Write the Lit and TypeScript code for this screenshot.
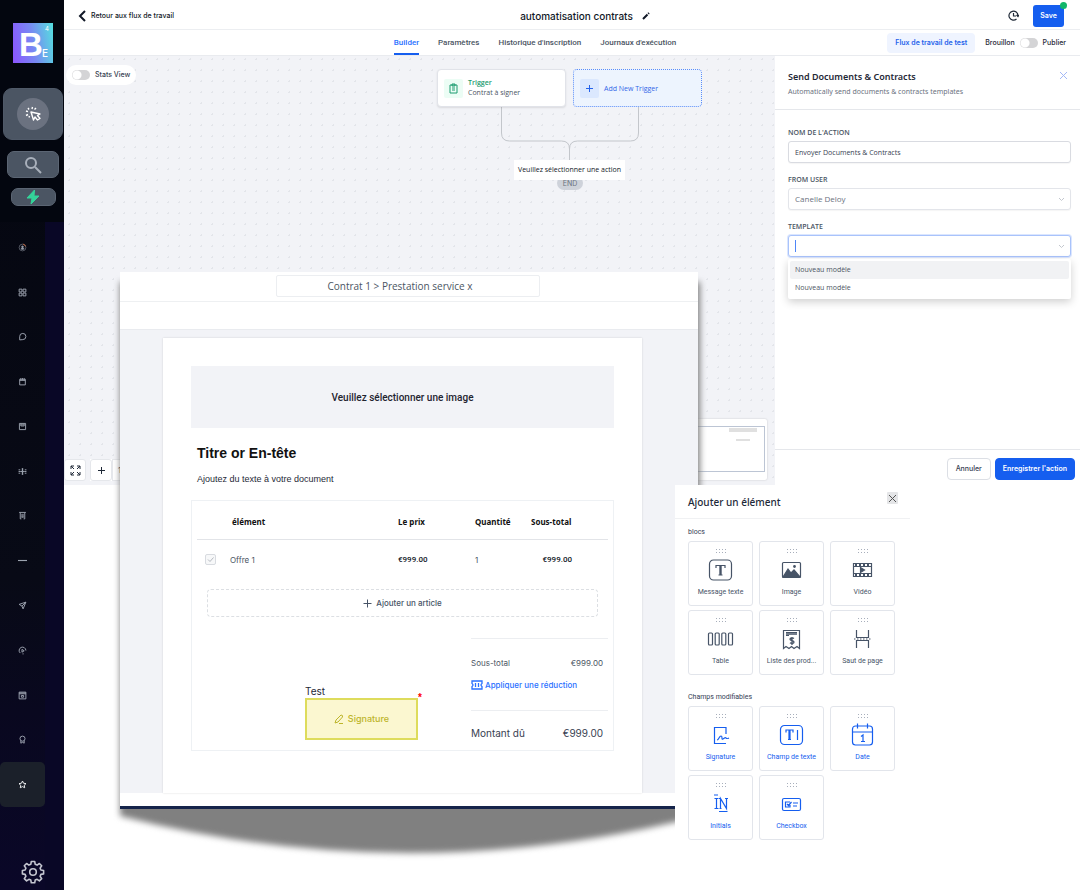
import { LitElement, html, css, svg, TemplateResult } from "lit";
import { customElement } from "lit/decorators.js";
import { classMap } from "lit/directives/class-map.js";

type Glyph = TemplateResult;

const navIcons: { label: string; art: Glyph }[] = [
  { label: "Lancement", art: svg`<circle cx="8" cy="8" r="6" opacity=".5"/><path d="M9 2a6 6 0 0 1 4.500 4" stroke="#c2643a"/><path d="M8 5v6M6 7l2-2 2 2M6 8v3h4V8"/>` },
  { label: "Tableau de bord", art: svg`<path d="M2 2h5v5H2zM9 2h5v5H9zM2 9h5v5H2zM9 9h5v5H9z"/>` },
  { label: "Conversations", art: svg`<path d="M3 14V8a5.500 5.500 0 1 1 5.500 5.500z"/>` },
  { label: "Calendriers", art: svg`<path d="M3 4h10v10H3zM3 6h10M5 2v3M8 2v3M11 2v3"/>` },
  { label: "Contacts", art: svg`<path d="M2.500 2.500h11v11h-11zM5 3v4h6V3M5 5h6"/>` },
  { label: "Opportunités", art: svg`<path d="M8 2v12" stroke-width="2.500"/><path d="M1 5h3M1 8h4M1 11h3M12 5h3M11 8h4M12 11h3"/><path d="M5 8h6"/>` },
  { label: "Paiements", art: svg`<path d="M2 2.500h12M4 3v11M12 3v11M4 14h2M10 14h2M7 5v6M9 5v6M6 11h4"/>` },
  { label: "Séparateur", art: svg`<path d="M0 8h16" stroke-width="2"/>` },
  { label: "Marketing", art: svg`<path d="M14 2L2 6l5 3 2 5zM14 2L7 9"/>` },
  { label: "Automatisation", art: svg`<path d="M4 12.500A6 6 0 1 1 14 8M7 6v5l4-2.500zM8 14h2"/>` },
  { label: "Sites", art: svg`<path d="M2 2h12v12H2zM2 5h12M6 8h4v3H6zM2 3.500h12"/>` },
  { label: "Réputation", art: svg`<circle cx="8" cy="6.500" r="4.500"/><path d="M5 10v4.500L8 13l3 1.500V10"/>` },
  { label: "Favoris", art: svg`<path d="M8 1.800l1.900 4 4.300.6-3.100 3 .8 4.400L8 11.700l-3.900 2.100.8-4.400-3.100-3 4.300-.6z"/>` },
];

interface Tile { label: string; art: Glyph }

const blocks: Tile[] = [
  { label: "Message texte", art: svg`<rect x="3.500" y="5" width="22" height="20" rx="4"/><path d="M10 13v-2.500h9V13M12.500 20h4"/><path d="M14.500 10v10" stroke-width="2.400"/>` },
  { label: "Image", art: svg`<rect x="5.500" y="7.500" width="18" height="15" rx="1"/><path d="M6 22l5-8 3 4 2-2 1-1 6 7z" fill="currentColor"/><circle cx="17.500" cy="11.500" r=".8" fill="currentColor"/>` },
  { label: "Vidéo", art: svg`<path d="M5.500 8.500h18v13h-18zM5.500 11.500h18M5.500 18.500h18"/><path d="M7 10h15M7 20h15" stroke-dasharray="2 2" stroke-width="2"/><path d="M12.500 12.500v5l4-2.500z" fill="currentColor"/>` },
  { label: "Table", art: svg`<rect x="2.500" y="9" width="4" height="12" rx="1"/><rect x="9.200" y="9" width="4" height="12" rx="1"/><rect x="15.800" y="9" width="4" height="12" rx="1"/><rect x="22.500" y="9" width="4" height="12" rx="1"/>` },
  { label: "Liste des prod...", art: svg`<path d="M6.500 24.500v-18h16v18l-2.500-2-3 2-2.500-2-2.500 2-3-2zM9 8.500h11M9 11.500h3"/><path d="M9 10h11" stroke-width="1.500"/><path d="M17 14.500c-1-.8-4-.8-4 .8s4 1 4 2.700-3 1.700-4 .8M15 13v8" stroke-width="1.300"/>` },
  { label: "Saut de page", art: svg`<path d="M8.500 6v7.500h12V6M8.500 24v-7.500h12V24"/><path d="M6 15h18" stroke-dasharray="1.500 1.500"/>` },
];

const fields: Tile[] = [
  { label: "Signature", art: svg`<path d="M20 14V7.500H8.500v16H14M11 20c2 0 2-4 4-4s0 4 2 3 2-2 3-1 1 1 3 0M13 23.500h7"/>` },
  { label: "Champ de texte", art: svg`<rect x="3.500" y="5.500" width="22" height="19" rx="4"/><path d="M9 12.500v-2.500h7v2.500M11 19.500h3"/><path d="M12.500 10v9.500" stroke-width="2.200"/><path d="M20.500 10v10"/>` },
  { label: "Date", art: svg`<rect x="4.500" y="6" width="20" height="19" rx="3"/><path d="M4.500 12h20M9.500 3.500v5M19.500 3.500v5M13 16.500l2-1.500v6.500M13 21.500h4"/>` },
  { label: "Initials", art: svg`<path d="M8 6h4M8.500 9.500h4M10.500 9.500v10M8.500 19.500h4M14.500 19.500v-10l6 10v-10M13 22.500h8.500M13 9.500h2M19 9.500h3M13.500 19.500h2"/>` },
  { label: "Checkbox", art: svg`<rect x="5.500" y="9.500" width="18" height="12" rx="1.500"/><path d="M13 13h-4.500v5H13v-2M10 15l1.500 1.500L14.500 13M16 14h5M16 17h4"/>` },
];

const base = css`
  *, *::before, *::after { box-sizing: border-box; }
  :host { font-family: Inter, "Liberation Sans", sans-serif; color: #1f2937; }
  button, input, select { font: inherit; color: inherit; margin: 0; }
  button { cursor: pointer; padding: 0; border: 0; background: none; }
  a { color: inherit; text-decoration: none; }
  svg { display: block; fill: none; stroke: currentColor; flex: none; }
  h1, h2, p, ul { margin: 0; padding: 0; font-weight: inherit; font-size: inherit; }
  ul { list-style: none; }
`;

@customElement("side-bar")
export class SideBar extends LitElement {
  static styles = [base, css`
    :host { display: flex; flex-direction: column; flex: none; width: 64px; color: #9ca3af;
      background: linear-gradient(180deg, #04060f, #080a16 65%, #09081f 80%, #0a0728) 0 0 / 45px 100% no-repeat, #090726; }
    .top { display: flex; flex-direction: column; align-items: center; height: 222px; padding: 23px 1px 0 3px; background: #03060f; }
    .logo { display: grid; grid-template-columns: 29px 11px; grid-template-rows: 12px 1fr; width: 40px; height: 40px; margin-bottom: 25px;
      background: linear-gradient(80deg, #8c54ff, #7789f2 50%, #55e0df); color: #fff; font-weight: 700; line-height: 1; }
    .logo b { grid-row: 1 / 3; font: 700 33px/44px "Liberation Sans", sans-serif; padding-left: 6px; }
    .logo sup { font: 400 6px/12px Inter, sans-serif; padding-left: 3px; }
    .logo sub { font: 500 10px/36px Inter, sans-serif; }
    .card { display: grid; place-items: center; background: #4b5563; border: 1px solid #5b6573; border-radius: 7px; }
    .tap { width: 60px; height: 52px; margin-bottom: 11px; border-radius: 9px; border-color: #4f5968; color: #fff; }
    .disc { display: grid; place-items: center; width: 32px; height: 32px; border-radius: 50%; background: #6b7280; }
    .find { width: 52px; height: 27px; margin-bottom: 10px; color: #a9b0bb; }
    .bolt { width: 45px; height: 18px; color: #34d399; }
    .bolt svg { fill: currentColor; stroke: none; }
    nav { display: flex; flex-direction: column; height: 585px; width: 45px; padding-top: 3px; }
    nav a { display: grid; place-items: center; flex: 1; border-radius: 5px; }
    nav a.on { background: #1b202a; color: #f3f4f6; }
    .gear { align-self: center; margin-top: 53px; margin-left: 2px; color: #c3c5cf; }
  `];
  render() {
    return html`
      <div class="top">
        <div class="logo"><b>B</b><sup>4</sup><sub>E</sub></div>
        <button class="card tap" aria-label="Actions"><span class="disc">
          <svg width="16" height="16" viewBox="0 0 16 16" stroke-width="1.400" stroke-linejoin="round"><path d="M6 6l2.500 8 1.500-3 2.500 3 2.500-1.500-2.500-3L15 8zM7.500 1L7 3M3 2l1 1.500M1 5l2 .7M1 9.500l2-1M4 11.500l.5-1.500M11 2L9.500 3.500"/></svg>
        </span></button>
        <button class="card find" aria-label="Rechercher">
          <svg width="18" height="18" viewBox="0 0 18 18" stroke-width="2"><circle cx="7" cy="7" r="5"/><path d="M11 11l6 6"/></svg>
        </button>
        <button class="card bolt" aria-label="Rapide">
          <svg width="14" height="16" viewBox="0 0 14 16"><path d="M8.500 1L1 9h5l-1 6 8-8H8z" stroke="currentColor" stroke-linejoin="round"/></svg>
        </button>
      </div>
      <nav aria-label="Navigation">
        ${navIcons.map((n, i) => html`<a href="#" aria-label=${n.label} class=${classMap({ on: i === navIcons.length - 1 })}>
          <svg width="9" height="9" viewBox="0 0 16 16" stroke-width="1.700">${n.art}</svg></a>`)}
      </nav>
      <button class="gear" aria-label="Réglages">
        <svg width="24" height="24" viewBox="0 0 24 24" stroke-width="1.600" stroke-linejoin="round"><circle cx="12" cy="12" r="3.300"/>
        <path d="M10.300 1.500h3.400l.5 2.800 1.900.8 2.300-1.600 2.300 2.300-1.600 2.300.8 1.900 2.700.5v3.400l-2.700.5-.8 1.900 1.600 2.300-2.300 2.300-2.300-1.600-1.900.8-.5 2.700h-3.400l-.5-2.700-1.900-.8-2.300 1.600-2.300-2.300 1.600-2.300-.8-1.900-2.700-.5v-3.400l2.700-.5.8-1.900-1.600-2.300 2.300-2.300 2.300 1.600 1.900-.8z"/></svg>
      </button>`;
  }
}

@customElement("flow-canvas")
export class FlowCanvas extends LitElement {
  static styles = [base, css`
    :host { display: block; position: relative; overflow: hidden; background: #f2f3f7 radial-gradient(circle, #e3e5ea 1px, transparent 1px) 0 -2px / 11px 11px; }
    .stats { position: absolute; left: 2px; top: 9px; display: flex; align-items: center; gap: 5px; height: 20px; padding: 0 6px;
      border-radius: 10px; background: #fff; font: 500 7px/10px Inter, sans-serif; color: #374151; }
    .switch { appearance: none; width: 18px; height: 10px; margin: 0; border-radius: 5px; background: radial-gradient(circle at 5px 5px, #fff 4px, #d4d4d6 5px); }
    .node { position: absolute; top: 13px; display: flex; align-items: center; gap: 5px; width: 129px; height: 38px; padding-left: 6px;
      border: 1px solid #e1e3e9; border-radius: 4px; background: #fff; box-shadow: 0 1px 2px #0000001a; text-align: left; }
    .trigger { left: 373px; }
    .add { left: 509px; border: 1px dotted #5b8df8; background: #edf4fe; color: #3366e8; font: 500 7px/9px "Open Sans", sans-serif; box-shadow: none; }
    .icon { display: grid; place-items: center; width: 19px; height: 19px; border-radius: 2px; background: #ecfdf5; color: #1c9c70; }
    .add .icon { background: #dbe8fe; color: #2563eb; }
    .text { font: 400 7px/10px "Open Sans", sans-serif; color: #4b5563; }
    .text b { display: block; font-weight: 600; color: #1c9c70; }
    .wires { position: absolute; left: 437px; top: 51px; color: #c3c6cb; }
    .hint { position: absolute; left: 450px; top: 104px; padding: 0 4px; font: 400 7px/20px "Open Sans", sans-serif; color: #111827; background: #fff; white-space: nowrap; z-index: 1; }
    .end { position: absolute; left: 493px; top: 120px; width: 26px; height: 14px; border-radius: 7px; background: #ced2da; color: #6b7280; font: 400 7px/16px Inter, sans-serif; text-align: center; }
    .tools { position: absolute; left: 0; bottom: 4px; display: flex; gap: 4px; }
    .tools button { display: grid; place-items: center; width: 22px; height: 22px; background: #fff; border: 1px solid #e5e7eb; border-radius: 3px; }
    .zoom { display: flex; font-size: 8px; line-height: 22px; background: #fff; }
    .zoom span { padding: 0 5px; border: 1px solid #e5e7eb; line-height: 20px; }
    .map { position: absolute; right: 8px; bottom: 5px; width: 110px; height: 61px; padding: 7px 2px; background: #fff; border-radius: 2px; box-shadow: 0 0 2px #0003; }
    .view { display: flex; flex-direction: column; align-items: flex-end; gap: 7px; height: 46px; padding: 1px 7px 0 0; border: 1px solid #bcc5d4; }
    .view i { width: 28px; height: 4px; background: #e0e0e0; }
    .view i + i { width: 14px; height: 2px; margin-right: 7px; }
  `];
  render() {
    return html`
      <label class="stats"><input class="switch" type="checkbox">Stats View</label>
      <svg class="wires" width="139" height="54" stroke-width="1"><path d="M.5 0v26q0 8 8 8h52q8 0 8 8v12M137.500 0v26q0 8-8 8h-53q-8 0-8 8"/></svg>
      <button class="node trigger"><span class="icon"><svg width="9" height="11" viewBox="0 0 9 11"><path d="M1 2h7v8H1zM3 1h3v2H3zM3 5h3M3 7h3"/></svg></span>
        <span class="text"><b>Trigger</b>Contrat à signer</span></button>
      <button class="node add"><span class="icon"><svg width="9" height="9"><path d="M1 4.500h7M4.500 1v7"/></svg></span>Add New Trigger</button>
      <div class="end">END</div>
      <div class="hint">Veuillez sélectionner une action</div>
      <div class="tools">
        <button aria-label="Plein écran"><svg width="11" height="11" viewBox="0 0 11 11"><path d="M1 4V1h3M7 1h3v3M10 7v3H7M4 10H1V7M1 1l3 3M10 1L7 4M10 10L7 7M1 10l3-3"/></svg></button>
        <div class="zoom"><button aria-label="Zoom avant"><svg width="9" height="9"><path d="M1 4.500h7M4.500 1v7"/></svg></button><span>100%</span></div>
      </div>
      <div class="map"><div class="view"><i></i><i></i></div></div>`;
  }
}

@customElement("action-panel")
export class ActionPanel extends LitElement {
  static styles = [base, css`
    :host { display: flex; flex-direction: column; background: #fff; font-family: "Open Sans", sans-serif; }
    header { display: flex; justify-content: space-between; height: 54px; padding: 14px 12px 0 13px; border-bottom: 1px solid #e5e7eb; }
    h2 { font: 600 9px/14px "Noto Sans", sans-serif; }
    header p { font: 400 7px/14px "Noto Sans", sans-serif; color: #6b7280; margin-top: 1px; }
    .close { color: #a3b8f7; height: 14px; padding-bottom: 3px; }
    .form { flex: 1; display: flex; flex-direction: column; gap: 12px; padding: 18px 9px 12px 13px; }
    .field { position: relative; display: grid; gap: 3px; }
    label { font: 600 7px/10px "Open Sans", sans-serif; color: #4b5563; }
    .box { display: flex; align-items: center; position: relative; }
    .control { appearance: none; width: 100%; height: 22px; padding: 0 6px; border: 1px solid #d9dbe1; border-radius: 3px; background: #fff;
      font: 400 7px/12px "Open Sans", sans-serif; color: #374151; outline: none; box-shadow: 0 1px 1px #0000000a; }
    .box .control { color: #6b7280; border-color: #e3e5ea; font-size: 8px; }
    .box .control.focus { border-color: #a9c3fb; box-shadow: 0 0 0 1px #dbe6fe; }
    .chev { position: absolute; right: 6px; color: #c3c7ce; pointer-events: none; }
    .caret { position: absolute; left: 7px; width: 1px; height: 12px; background: #4f86f7; }
    .list { position: absolute; top: 100%; left: 0; right: 0; margin-top: 2px; padding: 2px; background: #fff; border-radius: 2px; box-shadow: 0 3px 8px #00000030; }
    .list li { padding: 0 5px; font: 400 7px/18px "Open Sans", sans-serif; color: #4b5563; border-radius: 2px; }
    .list li.on { background: #f1f2f4; }
    footer { display: flex; justify-content: flex-end; gap: 4px; height: 36px; padding: 8px 5px 0; border-top: 1px solid #e5e7eb; }
    footer button { height: 22px; padding: 0 8px; border: 1px solid #dcdfe5; border-radius: 4px; font: 500 7px/12px Inter, sans-serif; color: #374151; }
    footer .main { padding: 0 7px; background: #155eef; border-color: #155eef; color: #fff; font-weight: 600; }
  `];
  render() {
    const chev = html`<svg class="chev" width="7" height="5"><path d="M1 1l2.500 2.500L6 1"/></svg>`;
    return html`
      <header><div><h2>Send Documents &amp; Contracts</h2><p>Automatically send documents &amp; contracts templates</p></div>
        <button class="close" aria-label="Fermer"><svg width="9" height="9"><path d="M1 1l7 7M8 1L1 8"/></svg></button></header>
      <div class="form">
        <div class="field"><label for="name">NOM DE L'ACTION</label><input id="name" class="control" value="Envoyer Documents &amp; Contracts"></div>
        <div class="field"><label for="user">FROM USER</label><div class="box"><select id="user" class="control"><option>Canelle Deloy</option></select>${chev}</div></div>
        <div class="field"><label for="tpl">TEMPLATE</label><div class="box"><input id="tpl" class="control focus" role="combobox" aria-expanded="true" aria-controls="opts"><i class="caret"></i>${chev}</div>
          <ul id="opts" class="list" role="listbox"><li class="on" role="option" aria-selected="true">Nouveau modèle</li><li role="option" aria-selected="false">Nouveau modèle</li></ul></div>
      </div>
      <footer><button>Annuler</button><button class="main">Enregistrer l'action</button></footer>`;
  }
}

@customElement("contract-window")
export class ContractWindow extends LitElement {
  static styles = [base, css`
    :host { display: block; position: relative; width: 578px; }
    .shade { position: absolute; left: -20px; top: 0; fill: #808080; stroke: none; filter: blur(3px); }
    .win { position: relative; background: #fff; border-bottom: 3px solid #15244a; padding-bottom: 13px; }
    .crumb { display: grid; place-items: center; height: 30px; border-bottom: 1px solid #eef0f2; padding: 0 2px 1px 0; }
    .crumb input { width: 264px; height: 22px; padding: 0 16px 0 0; border: 1px solid #eceef1; border-radius: 2px; background: #fff; text-align: center; font: 400 10px/16px "Open Sans", sans-serif; color: #4b5563; }
    .bar { height: 28px; border-bottom: 1px solid #e9ebef; }
    .desk { padding: 8px 56px 0 43px; background: #f2f3f7; }
    .page { padding: 28px 28px 42px; background: #fff; box-shadow: 0 0 2px #0002; }
    .image { display: grid; place-items: center; height: 62px; width: 100%; padding-top: 1px; background: #f2f3f7; font: 500 10px/14px Roboto, sans-serif; color: #1f2430; }
    h1 { margin: 16px 6px 0; font: 700 14px/18px "Liberation Sans", sans-serif; color: #111; }
    .page > p { margin: 10px 6px 14px; font: 400 9px/14px "Liberation Sans", sans-serif; color: #1f2937; }
    .order { padding: 7px 5px 10px; border: 1px solid #eef1f4; font-size: 8px; }
    table { width: 100%; border-collapse: collapse; table-layout: fixed; }
    th { height: 31px; padding: 0 0 2px; border-bottom: 1px solid #e2e4e8; font: 700 8px/12px "Noto Sans", sans-serif; color: #111; text-align: left; white-space: nowrap; }
    td { height: 41px; padding: 0; font: 400 8px/12px Inter, sans-serif; color: #4b5563; }
    .tick { width: 33px; padding-left: 8px; }
    .item { width: 168px; padding-left: 2px; }
    .price { width: 77px; }
    .qty { width: 56px; }
    td.money { font: 500 8px/12px Roboto, sans-serif; color: #111827; }
    th.sum { text-align: left; }
    td.sum { padding-right: 36px; text-align: right; }
    .tick input { display: block; appearance: none; width: 11px; height: 11px; margin: 0; border: 1px solid #d8dbe0; border-radius: 2px; background: #f7f8f9; }
    .check { position: relative; display: block; width: 11px; }
    .check svg { position: absolute; inset: 0; color: #b5b9c0; }
    .more { display: flex; align-items: center; justify-content: center; gap: 4px; width: calc(100% - 20px); height: 28px; margin: 9px 10px 21px; border: 1px dashed #dcdfe3; border-radius: 4px;
      font: 500 8px/12px Inter, sans-serif; color: #475467; }
    .foot { display: flex; justify-content: space-between; align-items: flex-end; padding-left: 108px; }
    .sign { position: relative; width: 113px; font: 400 10px/13px Inter, sans-serif; color: #1f2937; }
    .sign button { display: flex; align-items: center; justify-content: center; gap: 4px; width: 113px; height: 42px; border: 2px solid #dedc5c; background: #fbf7d0; color: #bdb52a; font: 500 9px/14px Inter, sans-serif; }
    .sign em { position: absolute; right: -4px; top: 6px; color: #f00; font: 700 10px/14px "Liberation Sans", sans-serif; }
    .totals { width: 137px; font: 400 8px/14px Inter, sans-serif; color: #4b5563; }
    .totals div { display: flex; justify-content: space-between; padding-right: 5px; }
    .first { padding-top: 17px; border-top: 1px solid #eceef1; }
    .totals a { display: flex; align-items: center; gap: 2px; margin: 8px 0 18px; color: #2970ff; font: 500 8px/14px Inter, sans-serif; }
    .due { padding-top: 15px; border-top: 1px solid #eceef1; font: 400 10px/14px Inter, sans-serif; color: #374151; }
  `];
  render() {
    return html`
      <svg class="shade" width="640" height="600"><path d="M20 10H600V544Q310 618 20 544z"/></svg>
      <div class="win">
        <div class="crumb"><input aria-label="Titre" value="Contrat 1 &gt; Prestation service x"></div>
        <div class="bar"></div>
        <div class="desk"><div class="page">
          <button class="image">Veuillez sélectionner une image</button>
          <h1>Titre or En-tête</h1>
          <p>Ajoutez du texte à votre document</p>
          <div class="order">
            <table>
              <thead><tr><th class="tick"></th><th class="item">élément</th><th class="price">Le prix</th><th class="qty">Quantité</th><th class="sum">Sous-total</th></tr></thead>
              <tbody><tr><td class="tick"><span class="check"><input type="checkbox" checked aria-label="Offre 1"><svg width="11" height="11"><path d="M3 5.500l2 2 3.500-4"/></svg></span></td>
                <td>Offre 1</td><td class="money">€999.00</td><td>1</td><td class="sum money">€999.00</td></tr></tbody>
            </table>
            <button class="more"><svg width="9" height="9"><path d="M.5 4.500h8M4.500.5v8"/></svg>Ajouter un article</button>
            <div class="foot">
              <div class="sign">Test<em>*</em><button><svg width="10" height="10" viewBox="0 0 10 10"><path d="M1 9l1-3 5-5q2 0 1.500 2L4 8zM5 9.500h4"/></svg>Signature</button></div>
              <div class="totals">
                <div class="first"><span>Sous-total</span><span>€999.00</span></div>
                <a href="#"><svg width="12" height="10" viewBox="0 0 12 10" stroke-width="1.300"><path d="M1 1h10v2.500q-2 1.500 0 3V9H1V6.500q2-1.500 0-3zM4.500 3v4M7.500 3v4"/></svg>Appliquer une réduction</a>
                <div class="due"><span>Montant dû</span><span>€999.00</span></div>
              </div>
            </div>
          </div>
        </div></div>
      </div>`;
  }
}

@customElement("element-picker")
export class ElementPicker extends LitElement {
  static styles = [base, css`
    :host { display: block; position: relative; width: 235px; padding-bottom: 14px; background: #fff; }
    header { display: flex; justify-content: space-between; align-items: flex-start; height: 34px; padding: 7px 12px 0 13px; border-bottom: 1px solid #f0f1f3; }
    h2 { font: 500 10px/20px "Noto Sans", sans-serif; color: #1d2939; }
    .close { display: grid; place-items: center; width: 11px; height: 12px; border-radius: 1px; background: #e4e5e7; color: #555; }
    section { padding: 8px 0 0 13px; }
    section + section { padding-top: 17px; }
    h3 { margin: 0 0 4px; font: 400 7px/10px Roboto, sans-serif; color: #344054; }
    .grid { display: grid; grid-template-columns: repeat(3, 65px); gap: 4px 6px; }
    .tile { display: flex; flex-direction: column; align-items: center; height: 65px; padding: 6px 0 0; border: 1px solid #e2e5eb; border-radius: 3px; color: #475467; font: 400 7px/10px Roboto, sans-serif; }
    .tile.blue { color: #155eef; }
    .dots { width: 12px; height: 6px; background: radial-gradient(circle, #a7aebb 1px, transparent 1px) 0 0 / 3px 3px; }
    .art { margin: 1px 0 2px; }
  `];
  private tiles(list: Tile[], blue = false) {
    return html`<div class="grid">${list.map(t => html`<button class=${classMap({ tile: true, blue })}>
      <i class="dots"></i><svg class="art" width="29" height="30" viewBox="0 0 29 30" stroke-width="1.200">${t.art}</svg>${t.label}</button>`)}</div>`;
  }
  render() {
    return html`
      <header><h2>Ajouter un élément</h2><button class="close" aria-label="Fermer"><svg width="9" height="9"><path d="M1 1l7 7M8 1L1 8"/></svg></button></header>
      <section><h3>blocs</h3>${this.tiles(blocks)}</section>
      <section><h3>Champs modifiables</h3>${this.tiles(fields, true)}</section>`;
  }
}

@customElement("app-root")
export class AppRoot extends LitElement {
  static styles = [base, css`
    :host { display: flex; min-height: 100vh; background: #fff; }
    main { position: relative; flex: 1; min-width: 0; }
    .top, .tabs { display: grid; grid-template-columns: 1fr auto 1fr; align-items: center; }
    .top { height: 30px; padding: 2px 16px 0 14px; border-bottom: 1px solid #eceef1; }
    .back { display: flex; align-items: center; gap: 5px; font: 500 7px/12px Inter, sans-serif; color: #111827; }
    h1 { display: flex; align-items: center; gap: 9px; padding-left: 28px; font: 500 10px/14px Inter, sans-serif; color: #111827; }
    .right { display: flex; align-items: center; justify-content: flex-end; gap: 14px; }
    .save { position: relative; width: 31px; height: 22px; border-radius: 3px; background: #155eef; color: #fff; font: 600 7px/12px Inter, sans-serif; }
    .save::after { content: ""; position: absolute; right: -3px; top: -3px; width: 7px; height: 7px; border-radius: 50%; background: #12b76a; }
    .tabs { height: 26px; padding: 0 14px; border-bottom: 1px solid #e9ebef; }
    nav { display: flex; grid-column: 2; gap: 19px; height: 25px; padding-right: 74px; font: 500 8px/25px Roboto, sans-serif; color: #4b5563; }
    nav a { border-bottom: 2px solid transparent; }
    nav a.on { color: #2970ff; border-color: #155eef; }
    .pub { display: flex; align-items: center; justify-content: flex-end; gap: 5px; font: 500 7px/12px Inter, sans-serif; white-space: nowrap; }
    .test { height: 20px; margin-right: 5px; padding: 0 8px; border-radius: 4px; background: #eff4ff; color: #2563eb; font-weight: 600; }
    .switch { appearance: none; width: 18px; height: 10px; margin: 0; border-radius: 5px; background: radial-gradient(circle at 5px 5px, #fff 4px, #d4d4d6 5px); }
    .work { display: grid; grid-template-columns: minmax(0, 1fr) 305px; min-height: 429px; }
    contract-window { position: absolute; left: 56px; top: 272px; }
    .lower { padding-left: 611px; }
  `];
  render() {
    return html`
      <side-bar></side-bar>
      <main>
        <div class="top">
          <a class="back" href="#"><svg width="8" height="12" viewBox="0 0 8 12" stroke-width="2"><path d="M7 1L2 6l5 5"/></svg>Retour aux flux de travail</a>
          <h1>automatisation contrats <svg width="8" height="8" viewBox="0 0 8 8" stroke-width="2"><path d="M1 7l4.500-4.500M6.200 1.800L7 1"/></svg></h1>
          <div class="right">
            <button aria-label="Historique"><svg width="11" height="11" viewBox="0 0 11 11" stroke-width="1.200"><path d="M8.500 9A4.500 4.500 0 1 1 10 5.500M5.500 3v3h2.500M8.500 5l1.500 1.500L11 5"/></svg></button>
            <button class="save">Save</button>
          </div>
        </div>
        <div class="tabs">
          <nav><a class="on" href="#">Builder</a><a href="#">Paramètres</a><a href="#">Historique d'inscription</a><a href="#">Journaux d'exécution</a></nav>
          <div class="pub"><button class="test">Flux de travail de test</button><label for="pub">Brouillon</label><input id="pub" class="switch" type="checkbox" aria-label="Publier"><span>Publier</span></div>
        </div>
        <div class="work"><flow-canvas></flow-canvas><action-panel></action-panel></div>
        <contract-window></contract-window>
        <div class="lower"><element-picker></element-picker></div>
      </main>`;
  }
}
